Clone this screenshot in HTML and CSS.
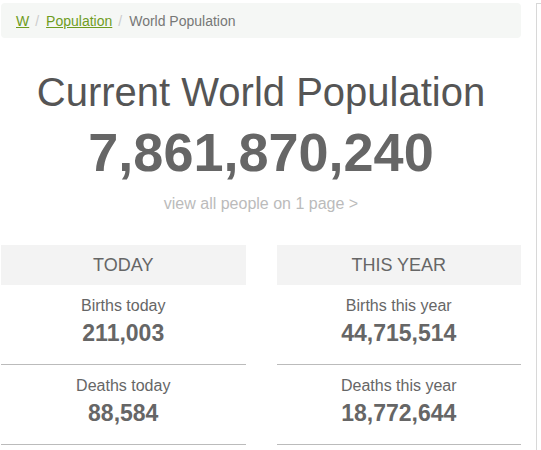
FILE: index.html
```html
<!doctype html>
<html>
    <head>
        <title>Current World Population</title>
        <link rel="stylesheet" href="styles.css">
    </head>
    <body>
        <div class="page">
            <div class="main">
                <div class="breadcrumb">
                    <a href="#">W</a><span class="sep">/</span>
                    <a href="#">Population</a><span class="sep">/</span>
                    <span class="active">World Population</span>
                </div>

                <div class="counter">
                    <h1>Current World Population</h1>
                    <div class="bigNumber">7,861,870,240</div>
                    <a class="viewAll" href="#">view all people on 1 page &gt;</a>
                </div>

                <div class="stats">
                    <div class="statsCol">
                        <div class="statsHead">TODAY</div>
                        <div class="statsRow">
                            <div class="statsLabel">Births today</div>
                            <div class="statsValue">211,003</div>
                        </div>
                        <div class="statsRow">
                            <div class="statsLabel">Deaths today</div>
                            <div class="statsValue">88,584</div>
                        </div>
                    </div>
                    <div class="statsCol">
                        <div class="statsHead">THIS YEAR</div>
                        <div class="statsRow">
                            <div class="statsLabel">Births this year</div>
                            <div class="statsValue">44,715,514</div>
                        </div>
                        <div class="statsRow">
                            <div class="statsLabel">Deaths this year</div>
                            <div class="statsValue">18,772,644</div>
                        </div>
                    </div>
                </div>
            </div>
            <div class="sidebar"></div>
        </div>
    </body>
</html>
```

FILE: styles.css
```css
html, body {
  overflow: hidden;
}

body {
  margin: 0;
  font-family: "Liberation Sans", Arial, sans-serif;
  color: #666;
}

.page {
  display: flex;
  align-items: flex-start;
}

.main {
  width: 520px;
  margin-left: 1px;
}

.sidebar {
  flex: 1;
  height: 600px;
  margin: 3px 0 0 15px;
  border: 1px solid #d8d8d8;
  border-right: 0;
}

/* Breadcrumb */
.breadcrumb {
  display: flex;
  align-items: center;
  height: 35px;
  margin-top: 3px;
  padding: 0 15px;
  background-color: #f5f7f5;
  border-radius: 4px;
  font-size: 14px;
}

.breadcrumb a {
  color: #6f9c1e;
}

.breadcrumb .sep {
  padding: 0 7px 0 6px;
  color: #ccc;
}

.breadcrumb .active {
  color: #777;
}

/* Counter */
.counter {
  text-align: center;
}

.counter h1 {
  margin: 31px 0 0;
  font-size: 40px;
  font-weight: normal;
  line-height: 46px;
  color: #555;
}

.bigNumber {
  margin-top: 6px;
  font-size: 54px;
  font-weight: bold;
  line-height: 62px;
  color: #666;
}

.viewAll {
  display: inline-block;
  margin-top: 12px;
  font-size: 16px;
  line-height: 18px;
  color: #bbb;
  text-decoration: none;
}

/* Today / this year */
.stats {
  display: grid;
  grid-template-columns: 1fr 1fr;
  gap: 31px;
  margin-top: 32px;
}

.statsHead {
  height: 40px;
  line-height: 40px;
  background-color: #f3f3f3;
  font-size: 18px;
  text-align: center;
}

.statsRow {
  height: 69px;
  padding-top: 10px;
  border-bottom: 1px solid #bbb;
  text-align: center;
}

.statsLabel {
  font-size: 16px;
  line-height: 22px;
}

.statsValue {
  margin-top: 3px;
  font-size: 23px;
  font-weight: bold;
  line-height: 26px;
}
```
